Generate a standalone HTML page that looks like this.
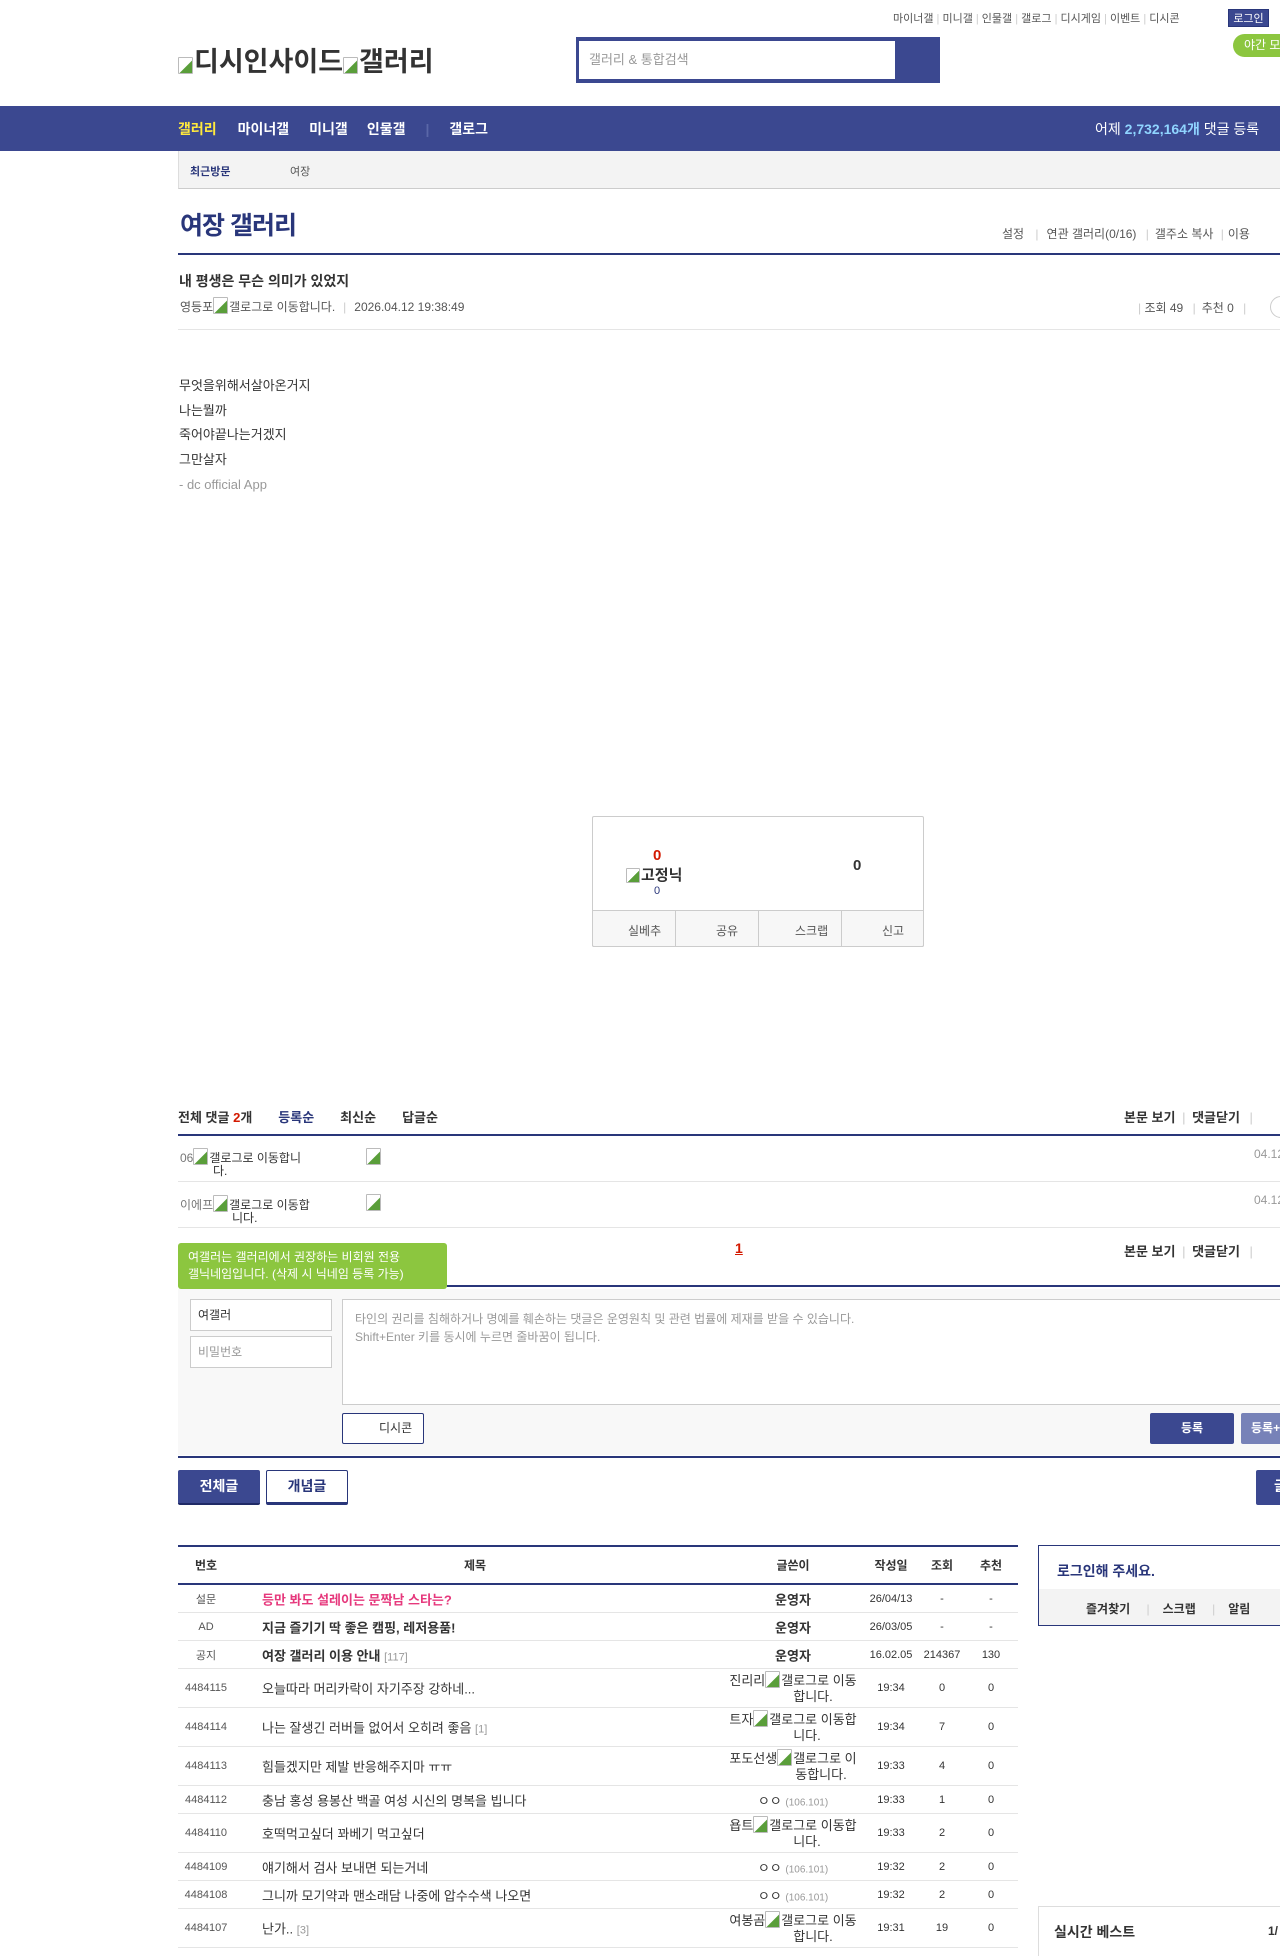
<!DOCTYPE html>
<html><head><meta charset="utf-8"><style>
*{margin:0;padding:0;box-sizing:border-box}
body{width:1280px;height:1948px;overflow:hidden;position:relative;background:#fff;font-family:"Liberation Sans","Noto Sans CJK KR",sans-serif;font-size:12px;color:#333}
.a{position:absolute;white-space:nowrap}
.bi{display:inline-block;width:15px;height:17px;border:1px solid #bbb;border-radius:1px;vertical-align:-3px;background:linear-gradient(135deg,#fff 55%,#5a9e3a 56%);margin-right:1px}
.navy{background:#3b4890}
.row{position:absolute;left:178px;width:840px;border-bottom:1px solid #e5e5e5;font-size:12px}
.row div{position:absolute;top:50%;transform:translateY(-50%);white-space:nowrap}
.c1{left:0;width:56px;text-align:center;font-size:11px;color:#555}
.c2{left:84px;font-size:13px}
.c3{left:540px;width:150px;text-align:center;font-size:13px}
.c4{left:683px;width:60px;text-align:center;font-size:11px}
.c5{left:735px;width:58px;text-align:center;font-size:11px}
.c6{left:790px;width:46px;text-align:center;font-size:11px}
.gray{color:#999}
</style></head><body>
<!-- top -->
<div class="a" style="left:893px;top:10px;font-size:11px;color:#555">마이너갤 <span style="color:#ccc">|</span> 미니갤 <span style="color:#ccc">|</span> 인물갤 <span style="color:#ccc">|</span> 갤로그 <span style="color:#ccc">|</span> 디시게임 <span style="color:#ccc">|</span> 이벤트 <span style="color:#ccc">|</span> 디시콘</div>
<div class="a navy" style="left:1228px;top:9px;width:41px;height:18px;color:#fff;font-size:11px;text-align:center;line-height:18px;border:1px solid #29367a">로그인</div>
<div class="a" style="left:1233px;top:34px;width:60px;height:23px;border-radius:12px;background:#8cc63f;color:#fff;font-size:12px;line-height:23px;padding-left:11px">야간 모드</div>
<div class="a" style="left:178px;top:40px;font-size:27px;font-weight:bold;color:#333"><span class="bi"></span>디시인사이드<span class="bi"></span>갤러리</div>
<div class="a navy" style="left:576px;top:37px;width:364px;height:46px"></div>
<div class="a" style="left:579px;top:41px;width:316px;height:38px;background:#fff;font-size:13px;color:#999;line-height:38px;padding-left:10px">갤러리 &amp; 통합검색</div>
<!-- nav -->
<div class="a navy" style="left:0;top:106px;width:1280px;height:45px"></div>
<div class="a" style="left:178px;top:119px;font-size:14px;font-weight:bold;color:#fff"><span style="color:#ffe93d">갤러리</span><span style="margin-left:21px">마이너갤</span><span style="margin-left:20px">미니갤</span><span style="margin-left:19px">인물갤</span><span style="margin-left:20px;color:#5a67a8">|</span><span style="margin-left:20px">갤로그</span></div>
<div class="a" style="left:1095px;top:119px;font-size:14px;color:#fff">어제 <b style="color:#8fd4ff">2,732,164개</b> 댓글 등록</div>
<div class="a" style="left:178px;top:151px;width:1102px;height:38px;background:#f3f3f3;border-left:1px solid #ddd;border-bottom:1px solid #ccc"></div>
<div class="a" style="left:190px;top:163px;font-size:11px;font-weight:bold;color:#29367a">최근방문</div>
<div class="a" style="left:290px;top:163px;font-size:11px;color:#555">여장</div>
<!-- title -->
<div class="a" style="left:180px;top:206px;font-size:25px;font-weight:bold;color:#29367a;letter-spacing:-1px">여장 갤러리</div>
<div class="a" style="left:1002px;top:225px;font-size:12px;color:#555">설정 <span style="color:#ccc;margin:0 8px">|</span>연관 갤러리(0/16) <span style="color:#ccc;margin:0 6px">|</span>갤주소 복사 <span style="color:#ccc;margin:0 4px">|</span>이용</div>
<div class="a" style="left:178px;top:253px;width:1102px;height:2px;background:#29367a"></div>
<div class="a" style="left:179px;top:271px;font-size:14px;font-weight:bold;color:#333">내 평생은 무슨 의미가 있었지</div>
<div class="a" style="left:180px;top:297px;font-size:12px;color:#555">영등포<span class="bi"></span>갤로그로 이동합니다.<span style="color:#ccc;margin:0 8px">|</span>2026.04.12 19:38:49</div>
<div class="a" style="left:1138px;top:299px;font-size:12px;color:#555"><span style="color:#ccc">|</span> 조회 49 <span style="color:#ccc;margin:0 6px">|</span>추천 0 <span style="color:#ccc;margin:0 6px">|</span></div>
<div class="a" style="left:1270px;top:296px;width:24px;height:22px;border:1px solid #ccc;border-radius:11px"></div>
<div class="a" style="left:178px;top:329px;width:1102px;height:1px;background:#e5e5e5"></div>
<div class="a" style="left:179px;top:374px;font-size:13px;color:#333;line-height:24.7px">무엇을위해서살아온거지<br>나는뭘까<br>죽어야끝나는거겠지<br>그만살자</div>
<div class="a" style="left:179px;top:477px;font-size:13px;color:#999">- dc official App</div>
<!-- vote -->
<div class="a" style="left:592px;top:816px;width:332px;height:131px;border:1px solid #ccc;border-radius:2px"></div>
<div class="a" style="left:592px;top:910px;width:332px;height:37px;background:#f7f7f7;border:1px solid #ccc;border-radius:0 0 2px 2px"></div>
<div class="a" style="left:675px;top:911px;width:1px;height:35px;background:#ccc"></div>
<div class="a" style="left:758px;top:911px;width:1px;height:35px;background:#ccc"></div>
<div class="a" style="left:841px;top:911px;width:1px;height:35px;background:#ccc"></div>
<div class="a" style="left:628px;top:922px;font-size:12px;color:#555">실베추</div>
<div class="a" style="left:716px;top:922px;font-size:12px;color:#555">공유</div>
<div class="a" style="left:795px;top:922px;font-size:12px;color:#555">스크랩</div>
<div class="a" style="left:882px;top:922px;font-size:12px;color:#555">신고</div>
<div class="a" style="left:653px;top:847px;font-size:15px;font-weight:bold;color:#d31900">0</div>
<div class="a" style="left:626px;top:864px;font-size:15px;font-weight:bold;color:#333"><span class="bi" style="width:14px;height:15px"></span>고정닉</div>
<div class="a" style="left:654px;top:885px;font-size:11px;color:#29367a">0</div>
<div class="a" style="left:853px;top:857px;font-size:15px;font-weight:bold;color:#333">0</div>
<!-- comments -->
<div class="a" style="left:178px;top:1107px;font-size:13px;font-weight:bold;color:#333">전체 댓글 <span style="color:#d31900">2</span>개<span style="color:#29367a;margin-left:26px">등록순</span><span style="margin-left:26px">최신순</span><span style="margin-left:26px">답글순</span></div>
<div class="a" style="left:1124px;top:1107px;font-size:13px;font-weight:bold;color:#333">본문 보기 <span style="color:#ccc;font-weight:normal;margin:0 3px">|</span> 댓글닫기 <span style="color:#ccc;font-weight:normal;margin-left:6px">|</span></div>
<div class="a" style="left:178px;top:1134px;width:1102px;height:2px;background:#29367a"></div>
<div class="a" style="left:180px;top:1148px;font-size:12px;color:#777;line-height:12px">06<span class="bi"></span><span style="color:#333">갤로그로 이동합니<br><span style="margin-left:33px">다.</span></span></div>
<div class="a" style="left:366px;top:1148px"><span class="bi"></span></div>
<div class="a" style="left:1254px;top:1147px;font-size:12px;color:#999">04.12</div>
<div class="a" style="left:178px;top:1181px;width:1102px;height:1px;background:#e5e5e5"></div>
<div class="a" style="left:180px;top:1195px;font-size:12px;color:#777;line-height:12px">이에프<span class="bi"></span><span style="color:#333">갤로그로 이동합<br><span style="margin-left:52px">니다.</span></span></div>
<div class="a" style="left:366px;top:1194px"><span class="bi"></span></div>
<div class="a" style="left:1254px;top:1193px;font-size:12px;color:#999">04.12</div>
<div class="a" style="left:178px;top:1227px;width:1102px;height:1px;background:#e5e5e5"></div>
<div class="a" style="left:178px;top:1243px;width:269px;height:46px;background:#8cc63f;border-radius:3px;color:#fff;font-size:12px;line-height:17px;padding:6px 0 0 10px">여갤러는 갤러리에서 권장하는 비회원 전용<br>갤닉네임입니다. (삭제 시 닉네임 등록 가능)</div>
<div class="a" style="left:212px;top:1288px;width:0;height:0;border-left:5px solid transparent;border-right:5px solid transparent;border-top:7px solid #8cc63f"></div>
<div class="a" style="left:735px;top:1240px;font-size:14px;font-weight:bold;color:#d31900;text-decoration:underline">1</div>
<div class="a" style="left:1124px;top:1241px;font-size:13px;font-weight:bold;color:#333">본문 보기 <span style="color:#ccc;font-weight:normal;margin:0 3px">|</span> 댓글닫기 <span style="color:#ccc;font-weight:normal;margin-left:6px">|</span></div>
<div class="a" style="left:447px;top:1285px;width:833px;height:2px;background:#29367a"></div>
<div class="a" style="left:178px;top:1289px;width:1102px;height:166px;background:#f8f8f8"></div>
<div class="a" style="left:190px;top:1299px;width:142px;height:32px;border:1px solid #ccc;background:#fff;font-size:12px;color:#333;line-height:30px;padding-left:7px">여갤러</div>
<div class="a" style="left:190px;top:1336px;width:142px;height:32px;border:1px solid #ccc;background:#fff;font-size:12px;color:#999;line-height:30px;padding-left:7px">비밀번호</div>
<div class="a" style="left:342px;top:1299px;width:940px;height:106px;border:1px solid #ccc;background:#fff;font-size:12px;color:#999;line-height:18px;padding:10px 0 0 12px">타인의 권리를 침해하거나 명예를 훼손하는 댓글은 운영원칙 및 관련 법률에 제재를 받을 수 있습니다.<br>Shift+Enter 키를 동시에 누르면 줄바꿈이 됩니다.</div>
<div class="a" style="left:342px;top:1413px;width:82px;height:31px;border:1px solid #29367a;background:#fff;border-radius:2px;font-size:12px;color:#333;line-height:29px;padding-left:36px">디시콘</div>
<div class="a navy" style="left:1150px;top:1413px;width:84px;height:31px;border-radius:2px;color:#fff;font-size:12px;font-weight:bold;line-height:31px;text-align:center">등록</div>
<div class="a" style="left:1241px;top:1413px;width:60px;height:31px;border-radius:2px;background:#7782b8;color:#fff;font-size:12px;font-weight:bold;line-height:31px;padding-left:10px">등록+추천</div>
<div class="a" style="left:178px;top:1456px;width:1102px;height:2px;background:#29367a"></div>
<div class="a navy" style="left:178px;top:1470px;width:82px;height:35px;border-radius:2px;border-bottom:2px solid #1f2a66;color:#fff;font-size:14px;font-weight:bold;line-height:33px;text-align:center">전체글</div>
<div class="a" style="left:266px;top:1470px;width:82px;height:35px;border-radius:2px;border:1px solid #29367a;border-bottom:3px solid #29367a;color:#29367a;font-size:14px;font-weight:bold;line-height:30px;text-align:center">개념글</div>
<div class="a navy" style="left:1256px;top:1470px;width:40px;height:35px;border-radius:2px;color:#fff;font-size:14px;font-weight:bold;line-height:33px;padding-left:18px">글쓰기</div>
<!-- table -->
<div class="a" style="left:178px;top:1545px;width:840px;height:2px;background:#29367a"></div>
<div class="row" style="top:1547px;height:38px;border-bottom:2px solid #29367a;font-weight:bold">
<div class="c1" style="font-size:12px;color:#333">번호</div><div style="left:286px;font-size:12px">제목</div><div class="c3" style="font-size:12px">글쓴이</div><div class="c4" style="font-size:12px">작성일</div><div class="c5" style="font-size:12px">조회</div><div class="c6" style="font-size:12px">추천</div></div>
<div class="row" style="top:1585px;height:28px"><div class="c1">설문</div><div class="c2" style="color:#e6387c;font-weight:bold">등만 봐도 설레이는 문짝남 스타는?</div><div class="c3" style="font-weight:bold">운영자</div><div class="c4">26/04/13</div><div class="c5">-</div><div class="c6">-</div></div>
<div class="row" style="top:1613px;height:28px"><div class="c1">AD</div><div class="c2" style="font-weight:bold">지금 즐기기 딱 좋은 캠핑, 레저용품!</div><div class="c3" style="font-weight:bold">운영자</div><div class="c4">26/03/05</div><div class="c5">-</div><div class="c6">-</div></div>
<div class="row" style="top:1641px;height:28px"><div class="c1">공지</div><div class="c2" style="font-weight:bold">여장 갤러리 이용 안내 <span class="gray" style="font-weight:normal;font-size:11px">[117]</span></div><div class="c3" style="font-weight:bold">운영자</div><div class="c4">16.02.05</div><div class="c5">214367</div><div class="c6">130</div></div>
<div class="row" style="top:1669px;height:39px"><div class="c1">4484115</div><div class="c2">오늘따라 머리카락이 자기주장 강하네...</div><div class="c3" style="line-height:16px">진리리<span class="bi"></span>갤로그로 이동<br><span style="margin-left:40px">합니다.</span></div><div class="c4">19:34</div><div class="c5">0</div><div class="c6">0</div></div>
<div class="row" style="top:1708px;height:39px"><div class="c1">4484114</div><div class="c2">나는 잘생긴 러버들 없어서 오히려 좋음 <span class="gray" style="font-size:11px">[1]</span></div><div class="c3" style="line-height:16px">트자<span class="bi"></span>갤로그로 이동합<br><span style="margin-left:28px">니다.</span></div><div class="c4">19:34</div><div class="c5">7</div><div class="c6">0</div></div>
<div class="row" style="top:1747px;height:39px"><div class="c1">4484113</div><div class="c2">힘들겠지만 제발 반응해주지마 ㅠㅠ</div><div class="c3" style="line-height:16px">포도선생<span class="bi"></span>갤로그로 이<br><span style="margin-left:56px">동합니다.</span></div><div class="c4">19:33</div><div class="c5">4</div><div class="c6">0</div></div>
<div class="row" style="top:1786px;height:28px"><div class="c1">4484112</div><div class="c2">충남 홍성 용봉산 백골 여성 시신의 명복을 빕니다</div><div class="c3">ㅇㅇ <span class="gray" style="font-size:10px">(106.101)</span></div><div class="c4">19:33</div><div class="c5">1</div><div class="c6">0</div></div>
<div class="row" style="top:1814px;height:39px"><div class="c1">4484110</div><div class="c2">호떡먹고싶더 꽈베기 먹고싶더</div><div class="c3" style="line-height:16px">욥트<span class="bi"></span>갤로그로 이동합<br><span style="margin-left:28px">니다.</span></div><div class="c4">19:33</div><div class="c5">2</div><div class="c6">0</div></div>
<div class="row" style="top:1853px;height:28px"><div class="c1">4484109</div><div class="c2">얘기해서 검사 보내면 되는거네</div><div class="c3">ㅇㅇ <span class="gray" style="font-size:10px">(106.101)</span></div><div class="c4">19:32</div><div class="c5">2</div><div class="c6">0</div></div>
<div class="row" style="top:1881px;height:28px"><div class="c1">4484108</div><div class="c2">그니까 모기약과 맨소래담 나중에 압수수색 나오면</div><div class="c3">ㅇㅇ <span class="gray" style="font-size:10px">(106.101)</span></div><div class="c4">19:32</div><div class="c5">2</div><div class="c6">0</div></div>
<div class="row" style="top:1909px;height:39px"><div class="c1">4484107</div><div class="c2">난가.. <span class="gray" style="font-size:11px">[3]</span></div><div class="c3" style="line-height:16px">여봉곰<span class="bi"></span>갤로그로 이동<br><span style="margin-left:40px">합니다.</span></div><div class="c4">19:31</div><div class="c5">19</div><div class="c6">0</div></div>
<!-- sidebar -->
<div class="a" style="left:1038px;top:1545px;width:260px;height:81px;border:1px solid #29367a;background:#fff"></div>
<div class="a" style="left:1039px;top:1589px;width:250px;height:36px;background:#f3f3f3"></div>
<div class="a" style="left:1057px;top:1561px;font-size:14px;font-weight:bold;color:#29367a">로그인해 주세요.</div>
<div class="a" style="left:1086px;top:1600px;font-size:12px;font-weight:bold;color:#333">즐겨찾기 <span style="color:#ccc;font-weight:normal;margin:0 13px">|</span>스크랩 <span style="color:#ccc;font-weight:normal;margin:0 13px">|</span>알림</div>
<div class="a" style="left:1038px;top:1906px;width:260px;height:50px;border:1px solid #ddd;border-bottom:none"></div>
<div class="a" style="left:1054px;top:1922px;font-size:14px;font-weight:bold;color:#333">실시간 베스트</div>
<div class="a" style="left:1268px;top:1924px;font-size:12px;font-weight:bold;color:#333">1/</div>
</body></html>
